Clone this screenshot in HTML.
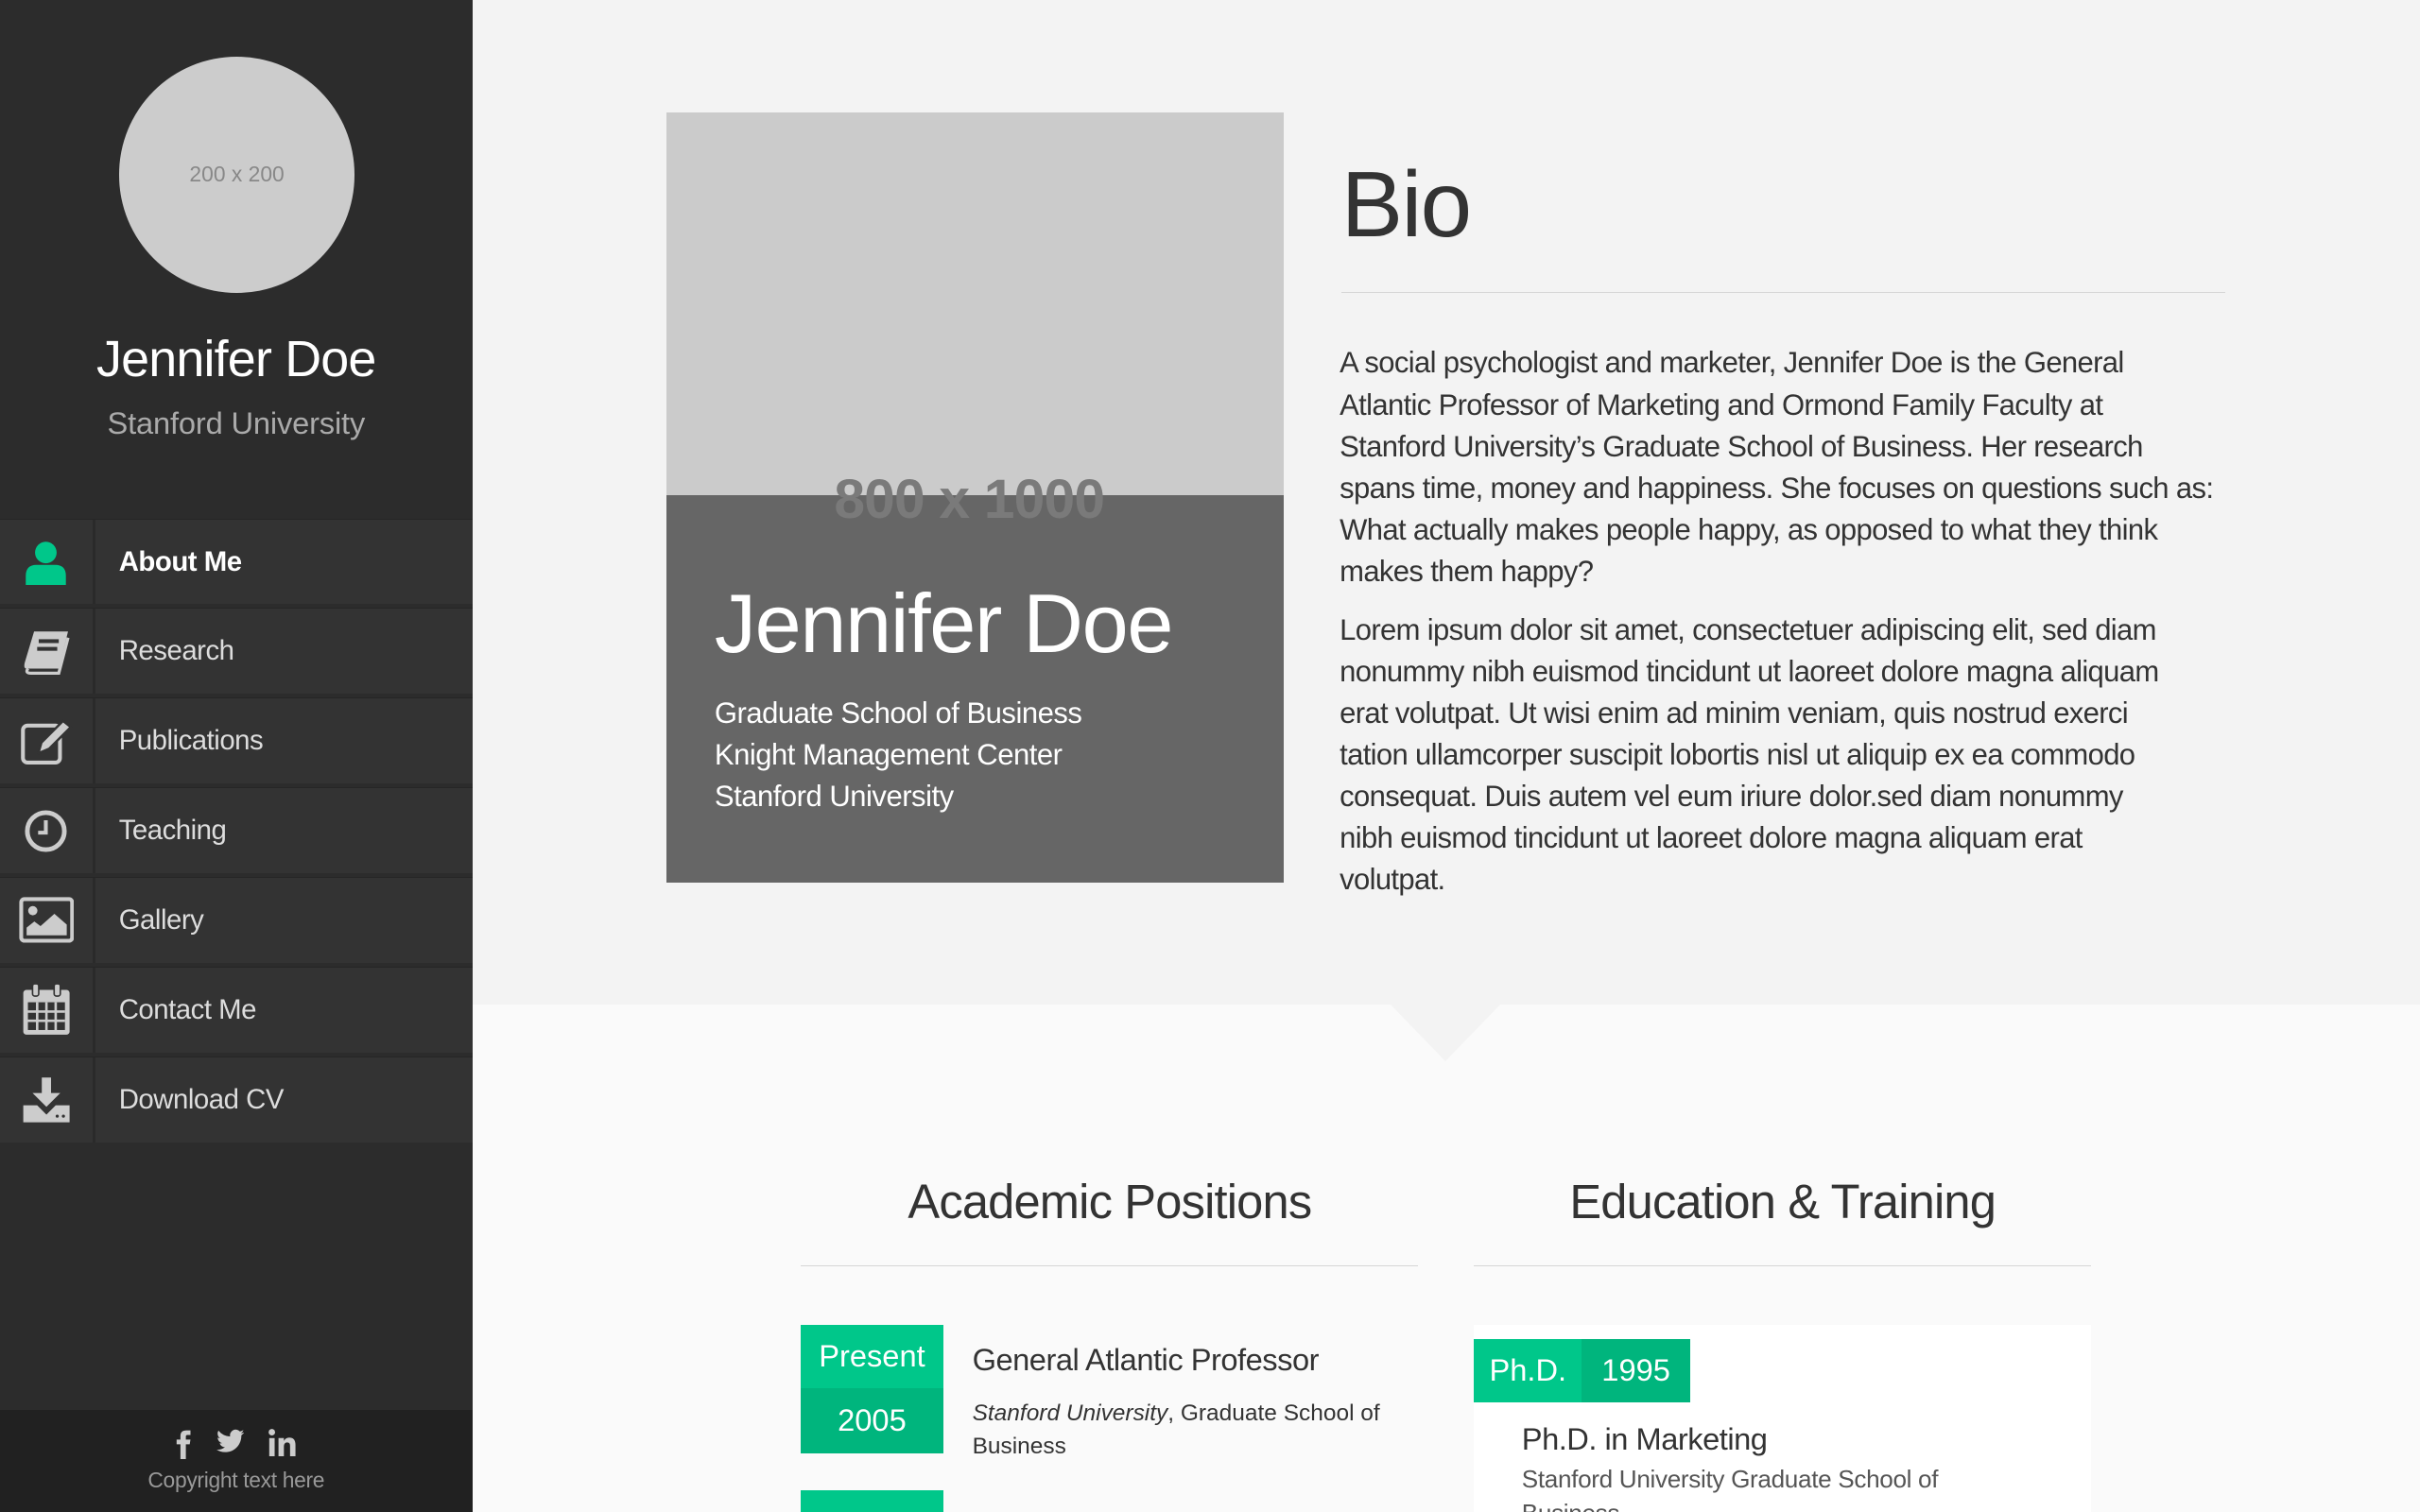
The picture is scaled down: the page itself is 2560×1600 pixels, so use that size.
<!DOCTYPE html>
<html><head><meta charset="utf-8"><style>
html,body{margin:0;padding:0;background:#fafafa;overflow:hidden}
#w{zoom:1.632653;width:1568px;height:980px;position:relative;font-family:"Liberation Sans",sans-serif;overflow:hidden}
.sb{position:absolute;left:0;top:0;width:306px;height:980px;background:#2c2c2c}
.av{position:absolute;left:77px;top:37px;width:153px;height:153px;border-radius:50%;background:#ccc;color:#888;font-size:14px;text-align:center;line-height:153px}
.nm{position:absolute;left:0;width:306px;text-align:center;top:214px;font-size:33px;color:#fff;letter-spacing:-0.5px}
.un{position:absolute;left:0;width:306px;text-align:center;top:263px;font-size:20px;color:#aaa;letter-spacing:-0.1px}
.nav{position:absolute;left:0;top:336px;width:306px}
.it{height:55px;margin-bottom:2.5px;background:#333;position:relative;border-top:1px solid #262626}
.it .ic{position:absolute;left:0;top:0;width:60px;height:55px;border-right:2px solid #2a2a2a;display:flex;align-items:center;justify-content:center}
.it .t{position:absolute;left:77px;top:0;line-height:55px;font-size:18px;color:#ddd;letter-spacing:-0.3px}
.ft{position:absolute;left:0;top:914px;width:306px;height:66px;background:#212121}
.ft .s{display:flex;justify-content:center;gap:16px;margin-top:12px;height:20px}
.ft .c{text-align:center;color:#999;font-size:14px;margin-top:5px;letter-spacing:-0.2px}
.top{position:absolute;left:306px;top:0;width:1262px;height:651px;background:#f3f3f3}
.ph{position:absolute;left:432px;top:73px;width:400px;height:499px;background:#cbcbcb}
.ov{position:absolute;left:0;top:248px;width:400px;height:251px;background:#666}
.ph .big{position:absolute;left:0;width:392px;text-align:center;top:230px;font-size:36px;font-weight:bold;color:#7a7a7a;z-index:2;letter-spacing:-0.5px}
.ov .n{position:absolute;left:31px;top:52px;font-size:54px;color:#fff;letter-spacing:-0.8px}
.ov .a{position:absolute;left:31px;top:128px;font-size:19px;color:#fff;line-height:27px;letter-spacing:-0.3px}
h1{position:absolute;left:869px;top:98px;margin:0;font-size:60px;font-weight:normal;color:#333;letter-spacing:-1px}
.hr{position:absolute;height:1px;background:#d6d6d6}
.bio{position:absolute;left:868px;top:222px;font-size:19px;line-height:27px;color:#333;letter-spacing:-0.4px;white-space:nowrap}
.bio p{margin:0 0 11px}
.notch{position:absolute;left:900px;top:650px;width:0;height:0;border-left:37px solid transparent;border-right:37px solid transparent;border-top:38px solid #f3f3f3}
h2{position:absolute;margin:0;font-size:31px;font-weight:normal;color:#333;text-align:center;width:400px;top:761px;letter-spacing:-0.5px}
.g{background:#00c78a;color:#fff;position:absolute;font-size:20px;text-align:center}
</style></head><body><div id="w">
<div class="sb">
<div class="av">200 x 200</div>
<div class="nm">Jennifer Doe</div>
<div class="un">Stanford University</div>
<div class="nav">
<div class="it"><div class="ic"><svg width="30" height="30" viewBox="0 0 30 30"><circle cx="15" cy="9" r="7" fill="#00c78a"/><path d="M2 30 V24 Q2 17 9 17 H21 Q28 17 28 24 V30 Z" fill="#00c78a"/></svg></div><div class="t" style="color:#fff;font-weight:bold">About Me</div></div>
<div class="it"><div class="ic"><svg width="32" height="30" viewBox="0 0 32 30"><path d="M8 2 H30 L24 26 H3 Q1 26 2 22 Z" fill="#ccc"/><path d="M4 26 Q2 29 6 29 H24 L30 6" stroke="#ccc" stroke-width="2" fill="none"/><rect x="11" y="7" width="13" height="2.5" fill="#333"/><rect x="10" y="12" width="13" height="2.5" fill="#333"/></svg></div><div class="t">Research</div></div>
<div class="it"><div class="ic"><svg width="34" height="32" viewBox="0 0 34 32"><rect x="2" y="6" width="24" height="24" rx="3" fill="none" stroke="#ccc" stroke-width="2.5"/><path d="M12 24 L14 17 L28 3 L33 7 L19 21 Z" fill="#ccc" stroke="#333" stroke-width="1.5"/></svg></div><div class="t">Publications</div></div>
<div class="it"><div class="ic"><svg width="30" height="30" viewBox="0 0 30 30"><circle cx="15" cy="15" r="12" fill="none" stroke="#ccc" stroke-width="3"/><path d="M15 8 V16 H10" stroke="#ccc" stroke-width="2.5" fill="none"/></svg></div><div class="t">Teaching</div></div>
<div class="it"><div class="ic"><svg width="36" height="30" viewBox="0 0 36 30"><rect x="1.5" y="1.5" width="33" height="27" rx="2" fill="none" stroke="#ccc" stroke-width="2.5"/><circle cx="9" cy="9" r="3" fill="#ccc"/><path d="M5 25 V20 L10 16 L14 19 L23 11 L31 18 V25 Z" fill="#ccc"/></svg></div><div class="t">Gallery</div></div>
<div class="it"><div class="ic"><svg width="32" height="34" viewBox="0 0 32 34"><rect x="1" y="4" width="30" height="29" rx="2" fill="#ccc"/><rect x="4" y="12" width="24" height="18" fill="#333"/><g stroke="#ccc" stroke-width="1.6"><path d="M4 18H28M4 24H28M10 12V30M16 12V30M22 12V30"/></g><rect x="7" y="0" width="4" height="8" rx="1.5" fill="#ccc" stroke="#333"/><rect x="21" y="0" width="4" height="8" rx="1.5" fill="#ccc" stroke="#333"/></svg></div><div class="t">Contact Me</div></div>
<div class="it"><div class="ic"><svg width="32" height="32" viewBox="0 0 32 32"><path d="M13 2 H19 V12 H25 L16 21 L7 12 H13 Z" fill="#ccc"/><path d="M1 20 H10 L16 26 L22 20 H31 V31 H1 Z" fill="#ccc"/><circle cx="23" cy="27" r="1" fill="#333"/><circle cx="27" cy="27" r="1" fill="#333"/></svg></div><div class="t">Download CV</div></div>
</div>
<div class="ft"><div class="s">
<svg width="10" height="20" viewBox="0 0 10 20"><path d="M3 20 V10 H0.5 V7 H3 V4.5 Q3 1 7 1 H9.5 V4 H7.5 Q6.5 4 6.5 5 V7 H9.5 L9 10 H6.5 V20 Z" fill="#ccc"/></svg>
<svg width="18" height="16" viewBox="0 0 24 20"><path d="M24 2.4a9.8 9.8 0 0 1-2.8.8A4.9 4.9 0 0 0 23.3.4a9.9 9.9 0 0 1-3.1 1.2A4.9 4.9 0 0 0 11.8 6 14 14 0 0 1 1.7.9a4.9 4.9 0 0 0 1.5 6.6A4.9 4.9 0 0 1 1 6.9a4.9 4.9 0 0 0 3.9 4.8 4.9 4.9 0 0 1-2.2.1 4.9 4.9 0 0 0 4.6 3.4A9.9 9.9 0 0 1 0 17.3 14 14 0 0 0 7.5 19.5c9.1 0 14-7.5 14-14v-.6A10 10 0 0 0 24 2.4z" fill="#ccc"/></svg>
<svg width="18" height="18" viewBox="0 0 18 18"><rect x="0.5" y="6" width="3.5" height="12" fill="#ccc"/><circle cx="2.2" cy="2.2" r="2.1" fill="#ccc"/><path d="M6.5 6 H10 V7.8 Q11.2 5.7 13.5 5.7 Q17.5 5.7 17.5 10.5 V18 H14 V11 Q14 8.8 12.2 8.8 Q10 8.8 10 11.5 V18 H6.5 Z" fill="#ccc"/></svg>
</div><div class="c">Copyright text here</div></div>
</div>
<div class="top"></div>
<div class="ph"><div class="big">800 x 1000</div><div class="ov"><div class="n">Jennifer Doe</div><div class="a">Graduate School of Business<br>Knight Management Center<br>Stanford University</div></div></div>
<h1>Bio</h1>
<div class="hr" style="left:869px;top:189px;width:573px"></div>
<div class="bio"><p>A social psychologist and marketer, Jennifer Doe is the General<br>Atlantic Professor of Marketing and Ormond Family Faculty at<br>Stanford University’s Graduate School of Business. Her research<br>spans time, money and happiness. She focuses on questions such as:<br>What actually makes people happy, as opposed to what they think<br>makes them happy?</p><p>Lorem ipsum dolor sit amet, consectetuer adipiscing elit, sed diam<br>nonummy nibh euismod tincidunt ut laoreet dolore magna aliquam<br>erat volutpat. Ut wisi enim ad minim veniam, quis nostrud exerci<br>tation ullamcorper suscipit lobortis nisl ut aliquip ex ea commodo<br>consequat. Duis autem vel eum iriure dolor.sed diam nonummy<br>nibh euismod tincidunt ut laoreet dolore magna aliquam erat<br>volutpat.</p></div>
<div class="notch"></div>
<h2 style="left:519px">Academic Positions</h2>
<h2 style="left:955px">Education &amp; Training</h2>
<div class="hr" style="left:519px;top:820px;width:400px"></div>
<div class="hr" style="left:955px;top:820px;width:400px"></div>
<div class="g" style="left:519px;top:859px;width:92px;height:41px;line-height:41px">Present</div>
<div class="g" style="left:519px;top:900px;width:92px;height:42px;line-height:42px;background:#00b57d">2005</div>
<div class="g" style="left:519px;top:966px;width:92px;height:20px"></div>
<div style="position:absolute;left:630px;top:870px;font-size:20px;color:#333;letter-spacing:-0.3px">General Atlantic Professor</div>
<div style="position:absolute;left:630px;top:905px;font-size:15px;color:#333;line-height:22px;width:280px"><i>Stanford University</i>, Graduate School of Business</div>
<div style="position:absolute;left:955px;top:859px;width:400px;height:130px;background:#fff"></div>
<div class="g" style="left:955px;top:868px;width:70px;height:41px;line-height:41px">Ph.D.</div>
<div class="g" style="left:1025px;top:868px;width:70px;height:41px;line-height:41px;background:#00b57d">1995</div>
<div style="position:absolute;left:986px;top:921px;font-size:20px;color:#333;letter-spacing:-0.3px">Ph.D. in Marketing</div>
<div style="position:absolute;left:986px;top:948px;font-size:16px;color:#555;line-height:22px;width:300px;letter-spacing:-0.2px">Stanford University Graduate School of Business</div>
</div></body></html>
